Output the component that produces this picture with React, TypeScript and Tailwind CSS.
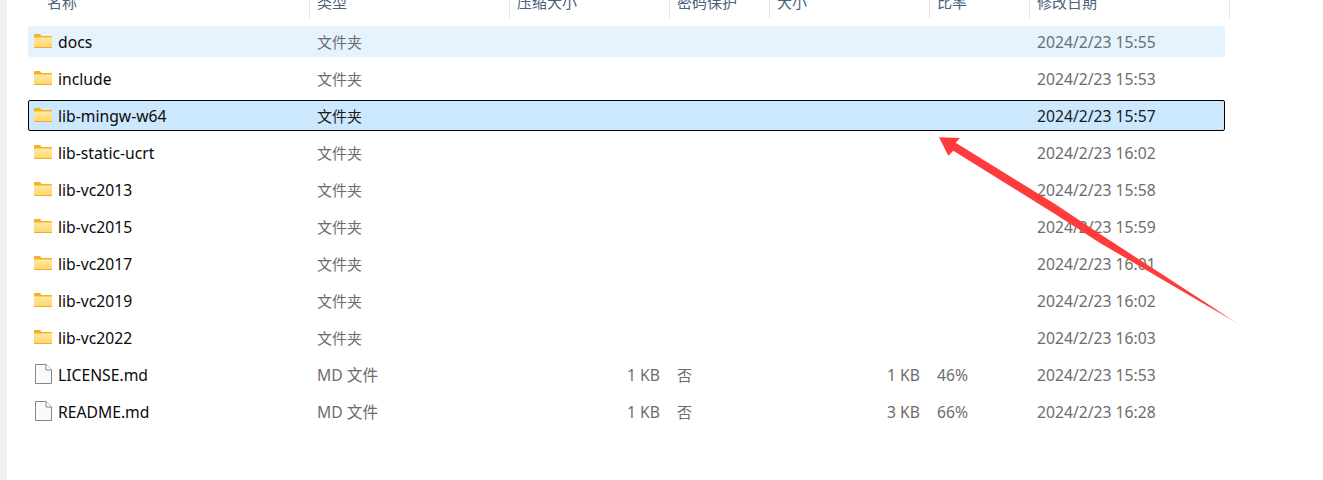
const rows = [
  { name: "docs", type: "文件夹", date: "2024/2/23 15:55", bg: "hover" },
  { name: "include", type: "文件夹", date: "2024/2/23 15:53" },
  { name: "lib-mingw-w64", type: "文件夹", date: "2024/2/23 15:57", bg: "selected" },
  { name: "lib-static-ucrt", type: "文件夹", date: "2024/2/23 16:02" },
  { name: "lib-vc2013", type: "文件夹", date: "2024/2/23 15:58" },
  { name: "lib-vc2015", type: "文件夹", date: "2024/2/23 15:59" },
  { name: "lib-vc2017", type: "文件夹", date: "2024/2/23 16:01" },
  { name: "lib-vc2019", type: "文件夹", date: "2024/2/23 16:02" },
  { name: "lib-vc2022", type: "文件夹", date: "2024/2/23 16:03" },
  { name: "LICENSE.md", type: "MD 文件", packed: "1 KB", lock: "否", size: "1 KB", ratio: "46%", date: "2024/2/23 15:53", file: true },
  { name: "README.md", type: "MD 文件", packed: "1 KB", lock: "否", size: "3 KB", ratio: "66%", date: "2024/2/23 16:28", file: true },
];

const headers = [
  { label: "名称", cls: "w-[281px] pl-[19px]" },
  { label: "类型", cls: "w-[200px] pl-[7px] border-l border-[#e5e5e5]" },
  { label: "压缩大小", cls: "w-[160px] pl-[7px] border-l border-[#e5e5e5]" },
  { label: "密码保护", cls: "w-[100px] pl-[7px] border-l border-[#e5e5e5]" },
  { label: "大小", cls: "w-[160px] pl-[7px] border-l border-[#e5e5e5]" },
  { label: "比率", cls: "w-[100px] pl-[7px] border-l border-[#e5e5e5]" },
  { label: "修改日期", cls: "w-[201px] pl-[7px] border-x border-[#e5e5e5]" },
];

function FolderIcon() {
  return (
    <svg width="18" height="14" viewBox="0 0 18 14" className="shrink-0">
      <defs>
        <linearGradient id="folderBody" x1="0" y1="0" x2="0" y2="1">
          <stop offset="0" stopColor="#ffe9a6" />
          <stop offset="1" stopColor="#ffd564" />
        </linearGradient>
      </defs>
      <path d="M0 1C0 .4.4 0 1 0H6l1.600 2H17.200c.4 0 .8.300.8.800V5H0z" fill="#f5b41f" />
      <path d="M0 3.500H18V13c0 .6-.4 1-1 1H1c-.6 0-1-.4-1-1z" fill="url(#folderBody)" />
      <path d="M0 13H18c0 .6-.4 1-1 1H1c-.6 0-1-.4-1-1z" fill="#efae2a" />
    </svg>
  );
}

function FileIcon() {
  return (
    <svg width="17" height="20" viewBox="0 0 17 20" className="shrink-0">
      <path d="M.5.500H11L16.500 6v13.500H.5z" fill="#fafafa" stroke="#858585" />
      <path d="M11 .500V6h5.500" fill="#ffffff" stroke="#858585" />
    </svg>
  );
}

export default function App() {
  return (
    <div className="relative h-[480px] w-[1323px] overflow-hidden bg-white font-['Noto_Sans','Noto_Sans_CJK_SC',sans-serif] text-[15px]">
      <div className="flex h-full">
        <div className="h-full w-[7px] shrink-0 bg-[#f0f0f0]" />
        <div className="flex-1 pl-[21px]">
          <div className="flex h-[18px] text-[#4c607a]">
            {headers.map((h) => (
              <div key={h.label} className={`${h.cls} h-full overflow-hidden`}>
                <div className="-mt-[9px] leading-[22px]">{h.label}</div>
              </div>
            ))}
          </div>
          <div className="mt-[8px] flex flex-col gap-[6px]">
            {rows.map((r) => {
              const selected = r.bg === "selected";
              const rowCls = selected
                ? "border border-black bg-[#cce8ff]"
                : r.bg === "hover"
                  ? "border border-transparent bg-[#e5f3ff]"
                  : "border border-transparent";
              const sub = selected ? "text-[#1a1a1a]" : "text-[#6d6d6d]";
              return (
                <div key={r.name} className={`flex h-[31px] w-[1197px] items-center rounded-[2px] leading-[22px] ${rowCls}`}>
                  <div className="flex w-[280px] items-center pl-[5px]">
                    <div className={`flex w-[18px] justify-center ${r.file ? "-mt-[1px]" : "-mt-[2px]"}`}>{r.file ? <FileIcon /> : <FolderIcon />}</div>
                    <span className="ml-[6px] text-[15.7px] text-[#0a0a0a]">{r.name}</span>
                  </div>
                  <div className={`w-[200px] pl-[8px] ${r.file ? "text-[15.7px]" : ""} ${sub}`}>{r.type}</div>
                  <div className={`w-[160px] pr-[9px] text-right text-[15.7px] ${sub}`}>{r.packed}</div>
                  <div className={`w-[100px] pl-[8px] ${sub}`}>{r.lock}</div>
                  <div className={`w-[160px] pr-[9px] text-right text-[15.7px] ${sub}`}>{r.size}</div>
                  <div className={`w-[100px] pl-[8px] text-[15.7px] ${sub}`}>{r.ratio}</div>
                  <div className={`pl-[8px] text-[15.7px] ${sub}`}>{r.date}</div>
                </div>
              );
            })}
          </div>
        </div>
      </div>
      <svg width="1323" height="480" viewBox="0 0 1323 480" className="pointer-events-none absolute left-0 top-0">
        <defs>
          <linearGradient id="arrowFade" gradientUnits="userSpaceOnUse" x1="939" y1="137" x2="1242" y2="326">
            <stop offset="0" stopColor="#ff3b3b" />
            <stop offset="0.9" stopColor="#ff3b3b" />
            <stop offset="1" stopColor="#ff3b3b" stopOpacity="0.15" />
          </linearGradient>
        </defs>
        <polygon points="939,137.300 960,138 955.700,142.700 1055,204 1100,234 1241.700,326 1100,243 1055,214 953.300,150.700 948.300,155.700" fill="url(#arrowFade)" />
      </svg>
    </div>
  );
}
